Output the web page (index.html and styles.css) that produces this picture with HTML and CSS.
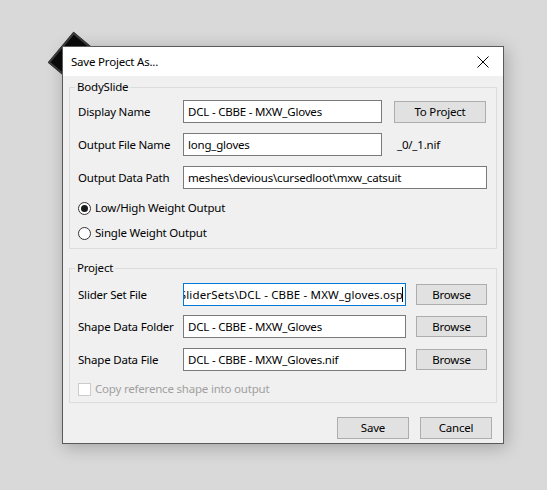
FILE: index.html
```html
<!DOCTYPE html>
<html>
<head>
<meta charset="utf-8">
<link rel="stylesheet" href="styles.css">
</head>
<body>
<div class="behind-icon"></div>
<div class="window">
  <div class="titlebar">
    <span class="title">Save Project As...</span>
    <svg class="close" width="12" height="12" viewBox="0 0 12 12"><path d="M0.5 0.5 L11.5 11.5 M11.5 0.5 L0.5 11.5" stroke="#000" stroke-width="1" fill="none"/></svg>
  </div>
  <div class="content">
    <fieldset class="group g1">
      <legend>BodySlide</legend>
      <div class="row">
        <span class="label">Display Name</span>
        <div class="field w199">DCL - CBBE - MXW_Gloves</div>
        <button class="btn to-project">To Project</button>
      </div>
      <div class="row r2">
        <span class="label">Output File Name</span>
        <div class="field w199">long_gloves</div>
        <span class="suffix">_0/_1.nif</span>
      </div>
      <div class="row r2">
        <span class="label">Output Data Path</span>
        <div class="field w304">meshes\devious\cursedloot\mxw_catsuit</div>
      </div>
      <div class="opt first">
        <span class="radio checked"></span><span>Low/High Weight Output</span>
      </div>
      <div class="opt">
        <span class="radio"></span><span>Single Weight Output</span>
      </div>
    </fieldset>
    <fieldset class="group g2">
      <legend>Project</legend>
      <div class="row">
        <span class="label">Slider Set File</span>
        <div class="field w223 focused"><span class="scrolled">SliderSets\DCL - CBBE - MXW_gloves.osp</span><span class="caret"></span></div>
        <button class="btn browse">Browse</button>
      </div>
      <div class="row p2">
        <span class="label">Shape Data Folder</span>
        <div class="field w223">DCL - CBBE - MXW_Gloves</div>
        <button class="btn browse">Browse</button>
      </div>
      <div class="row p3">
        <span class="label">Shape Data File</span>
        <div class="field w223">DCL - CBBE - MXW_Gloves.nif</div>
        <button class="btn browse">Browse</button>
      </div>
      <div class="opt check-row">
        <span class="checkbox"></span><span class="disabled">Copy reference shape into output</span>
      </div>
    </fieldset>
    <div class="actions">
      <button class="btn action">Save</button>
      <button class="btn action">Cancel</button>
    </div>
  </div>
</div>
</body>
</html>
```
FILE: styles.css
```css
html, body {
  margin: 0;
  padding: 0;
}
body {
  background: #d9d9d9;
  width: 547px;
  height: 490px;
  overflow: hidden;
  padding: 46px 0 0 62px;
  box-sizing: border-box;
  font-family: "Noto Sans", "Open Sans", sans-serif;
  font-size: 11.5px;
  letter-spacing: -0.2px;
  color: #000;
  position: relative;
}
.behind-icon {
  position: absolute;
  left: 56px;
  top: 40px;
  width: 40px;
  height: 40px;
  background: #0a0a0a;
  border: 2px solid #3c3c3c;
  box-sizing: border-box;
  transform: rotate(40deg);
}
.window {
  position: relative;
  width: 442px;
  height: 398px;
  box-sizing: border-box;
  border: 1px solid #5a5a5a;
  background: #f0f0f0;
  box-shadow: 2px 3px 16px rgba(0,0,0,0.25);
  display: flex;
  flex-direction: column;
}
.titlebar {
  height: 29px;
  background: #fff;
  display: flex;
  align-items: center;
  justify-content: space-between;
  padding: 0 14px 0 8px;
  flex-shrink: 0;
}
.title {
  line-height: 16px;
}
.close {
  display: block;
}
.content {
  padding: 3px 6px 0 6px;
  display: flex;
  flex-direction: column;
}
.group {
  margin: 0;
  border: 1px solid #dcdcdc;
  padding: 5px 8px 7px 8px;
  min-width: 0;
}
.group legend {
  padding: 0 2px;
  margin-left: -3px;
  line-height: 16px;
}
.g2 {
  margin-top: 11px;
  padding-top: 7px;
  padding-bottom: 5px;
}
.row {
  display: flex;
  align-items: center;
  height: 23px;
}
.r2 {
  margin-top: 10px;
}
.p2 {
  margin-top: 9px;
}
.p3 {
  margin-top: 10px;
}
.label {
  width: 105px;
  flex-shrink: 0;
  line-height: 16px;
}
.field {
  height: 23px;
  box-sizing: border-box;
  border: 1px solid #7a7a7a;
  background: #fff;
  padding: 0 4px;
  line-height: 21px;
  white-space: nowrap;
  overflow: hidden;
  flex-shrink: 0;
}
.w199 { width: 199px; }
.w223 { width: 223px; }
.w304 { width: 304px; }
.focused {
  border-color: #0078d7;
  padding: 0 2px 0 0;
  display: flex;
  justify-content: flex-end;
  align-items: center;
}
.scrolled {
  flex-shrink: 0;
  letter-spacing: 0.16px;
}
.caret {
  flex-shrink: 0;
  width: 1px;
  height: 15px;
  background: #000;
  margin-left: -1px;
}
.suffix {
  margin-left: 15px;
  line-height: 16px;
}
.btn {
  font: inherit;
  letter-spacing: inherit;
  color: #000;
  background: #e1e1e1;
  border: 1px solid #adadad;
  box-sizing: border-box;
  padding: 0;
  height: 22px;
  line-height: 20px;
  border-radius: 0;
}
.to-project {
  width: 92px;
  margin-left: 12px;
}
.browse {
  width: 71px;
  height: 21px;
  margin-left: 10px;
}
.opt {
  display: flex;
  align-items: center;
  height: 16px;
  margin-top: 9px;
  line-height: 16px;
}
.opt.first {
  margin-top: 11px;
}
.radio {
  width: 13px;
  height: 13px;
  box-sizing: border-box;
  border: 1px solid #333;
  border-radius: 50%;
  background: #fff;
  margin-right: 4px;
  position: relative;
  flex-shrink: 0;
}
.radio.checked::after {
  content: "";
  position: absolute;
  left: 2px;
  top: 2px;
  width: 7px;
  height: 7px;
  border-radius: 50%;
  background: #1a1a1a;
}
.check-row {
  margin-top: 10px;
}
.checkbox {
  width: 13px;
  height: 13px;
  box-sizing: border-box;
  border: 1px solid #cccccc;
  background: #fff;
  margin-right: 4px;
  flex-shrink: 0;
}
.disabled {
  color: #a0a0a0;
}
.actions {
  display: flex;
  justify-content: flex-end;
  gap: 11px;
  margin-top: 14px;
  padding-right: 5px;
}
.action {
  width: 72px;
  height: 22px;
}
```
